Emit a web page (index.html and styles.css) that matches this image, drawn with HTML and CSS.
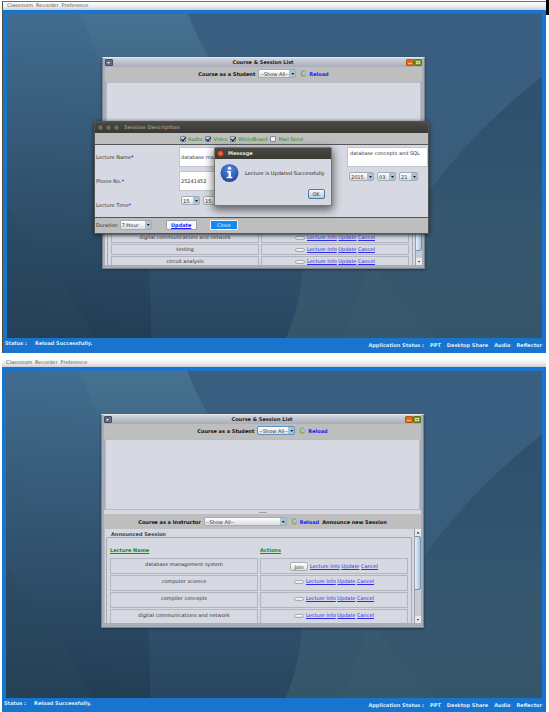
FILE: index.html
```html
<!DOCTYPE html>
<html lang="en">
<head>
<meta charset="utf-8">
<title>Classroom</title>
<link rel="stylesheet" href="styles.css">
</head>
<body>
<svg class="defs" aria-hidden="true">
  <defs>
    <linearGradient id="base" x1="0.4" y1="0" x2="0.3" y2="1"><stop offset="0" stop-color="#436e90"/><stop offset="1" stop-color="#233d55"/></linearGradient>
    <linearGradient id="mid" x1="0" y1="0" x2="0" y2="1"><stop offset="0" stop-color="#477191"/><stop offset=".5" stop-color="#355a78"/><stop offset="1" stop-color="#294660"/></linearGradient>
    <linearGradient id="right" x1="0" y1="0" x2="0" y2="1"><stop offset="0" stop-color="#3a5e81"/><stop offset=".5" stop-color="#395e7c"/><stop offset=".75" stop-color="#36586f"/><stop offset="1" stop-color="#35556a"/></linearGradient>
    <linearGradient id="wedge" x1="0" y1="0" x2="0" y2="1"><stop offset="0" stop-color="#2f506e"/><stop offset=".4" stop-color="#32546f"/><stop offset=".6" stop-color="#36586f"/><stop offset="1" stop-color="#35556a"/></linearGradient>
    <radialGradient id="ball" cx=".5" cy=".3" r=".7"><stop offset="0" stop-color="#5b8ade"/><stop offset="1" stop-color="#1d479c"/></radialGradient>
    <symbol id="wall" viewBox="0 0 535 326" preserveAspectRatio="none">
      <rect width="535" height="326" fill="url(#base)"/>
      <path d="M0 195Q45 250 88 326H0Z" fill="#2c4d5e" opacity=".3"/>
      <path d="M74 0C95 60 146 150 144 326H535V0Z" fill="url(#mid)"/>
      <path d="M181 0C215 95 340 180 279 326H535V0Z" fill="url(#right)"/>
      <path d="M535 63Q465 118 418 184L340 326H535Z" fill="url(#wedge)"/>
      <path d="M363 252L335 326H428Z" fill="#466a7c" opacity=".12"/>
    </symbol>
    <symbol id="reload" viewBox="0 0 12 12">
      <path d="M2 6A4 4 0 0 1 7 2" fill="none" stroke="#55b4dc" stroke-width="2"/>
      <path d="M9 3A4 4 0 0 1 9 9" fill="none" stroke="#7ebfd8" stroke-width="2"/>
      <path d="M9 9A4.200 4.200 0 0 1 2 7" fill="none" stroke="#86a82c" stroke-width="2"/>
      <path d="M6 0L9 2L6 4ZM0 7L2 4L4 7Z" fill="#8fb53a"/>
    </symbol>
  </defs>
</svg>

<section class="screen first">
  <nav class="menubar"><a href="#">Classroom</a><a href="#">Recorder</a><a href="#">Preference</a></nav>
  <main class="desktop">
    <svg class="wallpaper" aria-hidden="true"><use href="#wall"/></svg>
    <article class="window">
      <header class="titlebar"><button class="sysmenu" aria-label="Window menu"></button><h2>Course &amp; Session List</h2><button class="min" aria-label="Minimize"></button><button class="max" aria-label="Maximize"></button></header>
      <div class="toolbar">
        <label for="s1">Course as a Student</label>
        <span class="pick w38"><select id="s1"><option>--Show All--</option></select></span>
        <svg class="ico"><use href="#reload"/></svg><a class="reload" href="#">Reload</a>
      </div>
      <div class="pane"></div>
      <div class="scroller">
        <div class="group compact">
          <table>
            <tr><td>digital communications and network</td><td><button class="blank" aria-label="Join"></button><a href="#">Lecture Info</a> <a href="#">Update</a> <a href="#">Cancel</a></td></tr>
            <tr><td>testing</td><td><button class="blank" aria-label="Join"></button><a href="#">Lecture Info</a> <a href="#">Update</a> <a href="#">Cancel</a></td></tr>
            <tr><td>circuit analysis</td><td><button class="blank" aria-label="Join"></button><a href="#">Lecture Info</a> <a href="#">Update</a> <a href="#">Cancel</a></td></tr>
          </table>
        </div>
        <div class="bar"><i class="up"></i><i class="thumb"></i><i class="down"></i></div>
      </div>
    </article>

    <form class="dialog">
      <header class="darkbar"><i class="dot"></i><i class="dot"></i><i class="dot"></i><h2>Session Description</h2></header>
      <div class="checks">
        <label><input type="checkbox" checked>Audio</label>
        <label><input type="checkbox" checked>Video</label>
        <label><input type="checkbox" checked>WhiteBoard</label>
        <label><input type="checkbox">Mail Send</label>
      </div>
      <div class="fields">
        <label for="name">Lecture Name<b>*</b></label>
        <input id="name" type="text" value="database ma">
        <textarea aria-label="Description">database concepts and SQL</textarea>
        <label for="phone">Phone No.<b>*</b></label>
        <input id="phone" type="text" value="25241452">
        <div class="picks date">
          <span class="pick w25"><select aria-label="Year"><option>2015</option></select></span>
          <span class="pick w18"><select aria-label="Month"><option>03</option></select></span>
          <span class="pick w18"><select aria-label="Day"><option>21</option></select></span>
        </div>
        <label for="hour">Lecture Time<b>*</b></label>
        <div class="picks">
          <span class="pick w18"><select id="hour"><option>15</option></select></span>
          <span class="pick w18"><select aria-label="Minute"><option>15</option></select></span>
        </div>
      </div>
      <footer class="actions">
        <label for="dur">Duration</label>
        <span class="pick w32"><select id="dur"><option>7:Hour</option></select></span>
        <button class="update" type="button">Update</button>
        <button class="close" type="button">Close</button>
      </footer>
    </form>

    <div class="message" role="dialog" aria-label="Message">
      <header class="darkbar"><i class="dot hot"></i><h2>Message</h2></header>
      <div class="notice">
        <svg class="info" viewBox="0 0 20 20" aria-hidden="true"><circle cx="10" cy="10" r="9.500" fill="url(#ball)"/><circle cx="10" cy="5" r="1.700" fill="#fff"/><path d="M7.500 8h4v6h1.500v1.500h-6V14h2V9.500h-1.500z" fill="#fff"/></svg>
        <p>Lecture is Updated Successfully</p>
      </div>
      <button class="ok">OK</button>
    </div>
  </main>
  <footer class="status"><p><span>Status :</span><span>Reload Successfully.</span></p><p class="app"><span>Application Status :</span><span>PPT</span><span>Desktop Share</span><span>Audio</span><span>Reflector</span></p></footer>
</section>

<section class="screen second">
  <nav class="menubar"><a href="#">Classroom</a><a href="#">Recorder</a><a href="#">Preference</a></nav>
  <main class="desktop">
    <svg class="wallpaper" aria-hidden="true"><use href="#wall"/></svg>
    <article class="window">
      <header class="titlebar"><button class="sysmenu" aria-label="Window menu"></button><h2>Course &amp; Session List</h2><button class="min" aria-label="Minimize"></button><button class="max" aria-label="Maximize"></button></header>
      <div class="toolbar">
        <label for="s2">Course as a Student</label>
        <span class="pick focus w38"><select id="s2"><option>--Show All--</option></select></span>
        <svg class="ico"><use href="#reload"/></svg><a class="reload" href="#">Reload</a>
      </div>
      <div class="pane"></div>
      <div class="splitter"></div>
      <div class="toolbar">
        <label for="s3">Course as a Instructor</label>
        <span class="pick w83"><select id="s3"><option>--Show All--</option></select></span>
        <svg class="ico"><use href="#reload"/></svg><a class="reload" href="#">Reload</a><b>Announce new Session</b>
      </div>
      <div class="scroller tall">
        <div class="sheet">
          <h3>Announced Session</h3>
          <div class="group">
            <table>
              <tr><th>Lecture Name</th><th>Actions</th></tr>
              <tr><td>database management system</td><td class="joinable"><button class="join">Join</button><a href="#">Lecture Info</a> <a href="#">Update</a> <a href="#">Cancel</a></td></tr>
              <tr><td>computer science</td><td><button class="blank" aria-label="Join"></button><a href="#">Lecture Info</a> <a href="#">Update</a> <a href="#">Cancel</a></td></tr>
              <tr><td>compiler concepts</td><td><button class="blank" aria-label="Join"></button><a href="#">Lecture Info</a> <a href="#">Update</a> <a href="#">Cancel</a></td></tr>
              <tr><td>digital communications and network</td><td><button class="blank" aria-label="Join"></button><a href="#">Lecture Info</a> <a href="#">Update</a> <a href="#">Cancel</a></td></tr>
            </table>
          </div>
        </div>
        <div class="bar"><i class="up"></i><i class="thumb"></i><i class="down"></i></div>
      </div>
    </article>
  </main>
  <footer class="status"><p><span>Status :</span><span>Reload Successfully.</span></p><p class="app"><span>Application Status :</span><span>PPT</span><span>Desktop Share</span><span>Audio</span><span>Reflector</span></p></footer>
</section>
</body>
</html>
```
FILE: styles.css
```css
* { box-sizing: border-box; margin: 0; }
body {
  min-height: 100vh;
  display: grid;
  grid-template-rows: 352fr 354fr;
  gap: 5px;
  padding: 1px 3px 0 2px;
  background: #fff;
  color: #333;
  font: 5px/6px "DejaVu Sans", sans-serif;
}
/* dark strip at the page's upper right corner */
body::after { content: ""; position: absolute; top: 0; right: 0; width: 3px; height: 15px; background: #000; }
button, input, select, textarea { font: inherit; color: inherit; border-radius: 0; padding: 0; outline: none; appearance: none; }
h2, h3 { font-size: 5px; line-height: 6px; }
.defs { position: absolute; width: 0; height: 0; }

.screen { display: flex; flex-direction: column; background: #1874cd; min-width: 0; }
.first { border-top: 1px solid #697062; border-left: 1px solid #514f38; }
.menubar { display: flex; gap: 3px; height: 9px; padding: 1px 4px; background: linear-gradient(#fff, #f0f0f2 50%, #ccd0d6); }
.first .menubar { height: 8px; padding-top: 0; }
.menubar a { color: #555; text-decoration: none; }
.desktop { position: relative; flex: 1; margin: 4px 4px 0; overflow: hidden; }
.wallpaper { display: block; position: absolute; width: 100%; height: 100%; }
.status { display: flex; justify-content: space-between; height: 15px; padding: 2px 4px 0 2px; color: #dcecff; font-weight: bold; }
.status p { display: flex; gap: 8px; }
.status .app { padding-top: 2px; gap: 6px; }
.second .status { height: 14px; }

.window {
  position: absolute;
  left: 95px; right: 117px; top: 43px;
  height: 212px;
  display: flex;
  flex-direction: column;
  padding: 0 2px 3px;
  background: #a9adb8;
  border: 1px solid #7c828e;
  border-top-color: #e4e6ea;
  box-shadow: 0 1px 2px #1c3448;
}
.second .window { height: 214px; right: 118px; padding-bottom: 4px; }
.titlebar { display: flex; align-items: center; gap: 1px; height: 9px; background: linear-gradient(#d2d5dc, #a8acb8); color: #222; }
.titlebar h2 { flex: 1; text-align: center; padding: 0 0 2px 7px; }
.titlebar button { position: relative; width: 8px; height: 7px; border: 1px solid #444c5c; border-radius: 1px; background: #626b80; }
.titlebar .sysmenu::after { content: ""; position: absolute; left: 1px; top: 2px; width: 3px; height: 2px; background: #e8eaf0; clip-path: polygon(0 0, 100% 0, 50% 100%); }
.titlebar .min { border-color: #b85610; background: #d8701c; }
.titlebar .min::after { content: ""; position: absolute; left: 1px; bottom: 1px; width: 4px; height: 1px; background: #ffc890; }
.titlebar .max { border-color: #5c7418; background: #809a28; margin-left: -1px; }
.titlebar .max::after { content: ""; position: absolute; inset: 1px; border: 1px solid #d0dea0; }
.toolbar { display: flex; align-items: center; justify-content: center; gap: 3px; height: 15px; padding-bottom: 2px; background: #bebebe; color: #111; font-weight: bold; }
.splitter + .toolbar { padding-bottom: 0; }
.toolbar .ico { width: 7px; height: 7px; margin-left: 1px; }
.reload { color: #1a1aff; text-decoration: none; margin-left: -1px; }
.pane { flex: 1; margin: 0 1px; border: 1px solid #b6bcc6; background: #d6d9e1; }
.splitter { height: 4px; background: #d6d9e1; display: flex; align-items: center; justify-content: center; }
.splitter::after { content: ""; width: 8px; height: 1px; background: #9ba0aa; }
.scroller { display: flex; height: 63px; overflow: hidden; background: #d6d9e1; }
.scroller.tall { height: 94px; border-left: 1px solid #b6bcc6; }
.sheet { flex: 1; padding: 2px 1px 0 1px; }
.sheet h3 { padding-left: 5px; color: #444; }
.group { padding: 8px 1px 0; border: 1px solid #a6aab3; border-bottom: 0; border-radius: 2px 2px 0 0; }
.compact { flex: 1; margin: 0 1px 0 2px; padding: 28px 1px 0; }
table { width: 100%; table-layout: fixed; border-spacing: 2px 1px; }
th { height: 10px; padding: 0; text-align: left; vertical-align: top; color: #149014; text-decoration: underline; }
td { height: 16px; padding: 2px 0 0; border: 1px solid #b2b5bd; text-align: center; vertical-align: top; line-height: 6px; }
.compact td { height: 11px; padding-top: 1px; }
td a { color: #2b2be8; }
.joinable { padding-top: 4px; }
.blank, .join { border: 1px solid #a8acb4; border-radius: 2px; background: linear-gradient(#fff, #dcdfe4); vertical-align: middle; margin-right: 2px; }
.blank { width: 10px; height: 4px; }
.join { width: 18px; height: 9px; line-height: 6px; margin-top: -1px; }
.bar { display: flex; flex-direction: column; width: 7px; margin-left: 1px; background: #c8ccd4; border-left: 1px solid #9aa0aa; }
.bar .up, .bar .down { height: 7px; background: #e6e8ec; display: flex; align-items: center; justify-content: center; }
.bar .up::after, .bar .down::after { content: ""; width: 3px; height: 2px; background: #222; clip-path: polygon(50% 0, 100% 100%, 0 100%); }
.bar .down { margin-top: auto; }
.bar .down::after { clip-path: polygon(0 0, 100% 0, 50% 100%); }
.bar .thumb { height: 54px; border: 1px solid #6f93b4; border-left: 0; border-radius: 0 3px 3px 0; background: linear-gradient(90deg, #e6f0f8, #a8c6dc); }
.compact + .bar .thumb { height: 42px; }

.pick { position: relative; display: flex; height: 9px; border: 1px solid #a4abb4; border-radius: 2px; background: linear-gradient(90deg, transparent calc(100% - 6px), #a9c2d4 calc(100% - 6px)), linear-gradient(#fff, #d9dce2); font-weight: normal; color: #333; }
.pick.focus { border-color: #5f92bf; }
.pick::after { content: ""; position: absolute; right: 1px; top: 3px; width: 3px; height: 2px; background: #16202c; clip-path: polygon(0 0, 100% 0, 50% 100%); }
.pick select { width: 100%; border: 0; padding-left: 1px; background: none; line-height: 6px; }
.w18 { width: 19px; }
.w25 { width: 25px; }
.w32 { width: 32px; }
.w38 { width: 38px; }
.w83 { width: 83px; }

.dialog {
  position: absolute;
  left: 87px; right: 113px; top: 107px;
  border: 1px solid #55544e;
  background: #d6d9e1;
  box-shadow: 0 1px 4px #14202c;
  border-radius: 2px 2px 0 0;
}
.darkbar { display: flex; align-items: center; gap: 1px; height: 11px; padding: 0 0 1px 2px; background: linear-gradient(#4a4943, #3a3934); color: #8b8a82; }
.dot { width: 7px; height: 7px; border: 1px solid #33322e; border-radius: 50%; background: #6a6962; }
.dot.hot { background: #ee5c34; border-color: #7a2c14; }
.darkbar h2 { padding-left: 3px; }
.checks { display: flex; gap: 3px; align-items: center; height: 12px; padding-left: 85px; background: #bebebe; border-bottom: 1px solid #55565a; color: #1c8a1c; }
.checks label { display: flex; align-items: center; gap: 2px; }
.checks input { position: relative; width: 6px; height: 6px; border: 1px solid #7c8794; border-radius: 1px; background: #f4f6f9; }
.checks input:checked { background: #b9cddc; }
.checks input:checked::after { content: ""; position: absolute; left: 1px; top: -1px; width: 2px; height: 4px; border: solid #101820; border-width: 0 1px 1px 0; transform: rotate(40deg); }
.fields { display: grid; grid-template-columns: 83px 1fr 81px; grid-template-rows: 20px 20px 20px; row-gap: 4px; align-items: center; padding: 2px 0 2px 1px; }
.fields b { color: #2222ff; }
.fields input { width: 81px; height: 20px; border: 1px solid #c0c4cc; background: #fff; padding: 0 1px; }
.fields textarea { width: 81px; height: 20px; border: 1px solid #c0c4cc; background: #fff; padding: 2px; resize: none; overflow: hidden; display: block; white-space: nowrap; }
.picks { display: flex; gap: 3px; height: 20px; padding: 1px 2px; }
.actions { display: flex; align-items: center; height: 16px; padding: 0 0 1px 1px; background: #bebebe; border-top: 1px solid #55565a; }
.actions .pick { margin: 0 14px 0 2px; height: 10px; }
.actions button { height: 10px; border: 1px solid #9aa0aa; border-radius: 1px; }
.update { width: 31px; margin-right: 13px; background: #f4f6fa; color: #1a1aff; font-weight: bold; text-decoration: underline; }
.actions .close { width: 28px; background: #148af0; border-color: #f4f4f4; color: #e4f2ff; }

.message {
  position: absolute;
  left: 207px; top: 133px;
  display: flex;
  flex-direction: column;
  height: 59px;
  border: 1px solid #77766f;
  border-radius: 2px 2px 0 0;
  background: #d6d9e1;
  box-shadow: 0 3px 9px 1px #222a;
}
.message .darkbar { color: #e2e0d8; }
.notice { display: flex; gap: 6px; align-items: center; padding: 4px 6px 0 5px; color: #222; }
.info { width: 19px; height: 20px; }
.ok { align-self: flex-end; width: 17px; height: 10px; margin: 6px 6px 0 0; border: 1px solid #4a7aa6; border-radius: 2px; background: linear-gradient(#f4f8fc, #b4c8da); }
```
